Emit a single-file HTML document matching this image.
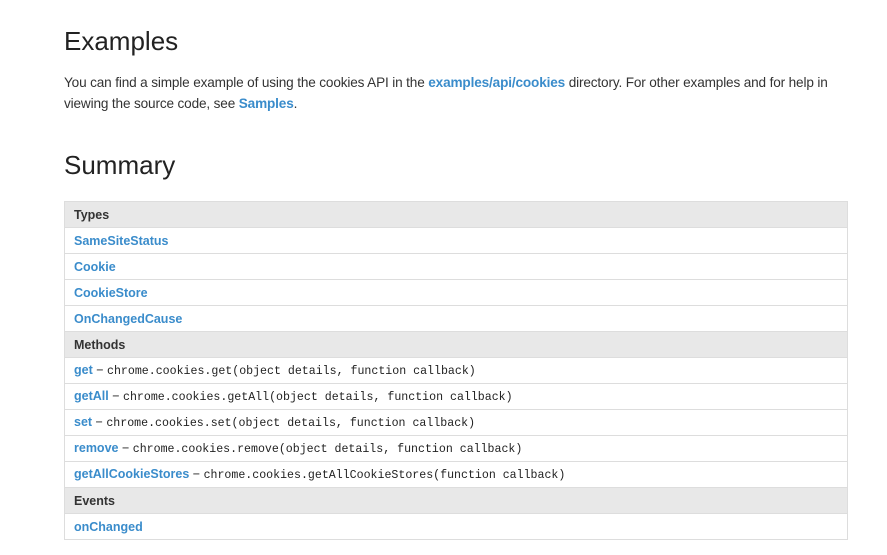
<!DOCTYPE html>
<html><head><style>
body{margin:0;background:#fff;font-family:"Liberation Sans",Arial,sans-serif;color:#222;}
h2{font-weight:normal;font-size:26px;margin:0;position:absolute;left:64px;}
p{position:absolute;left:64px;top:72px;margin:0;font-size:13.6px;line-height:21px;width:790px;color:#333;letter-spacing:-0.15px}
a{color:#3a8ccb;font-weight:bold;text-decoration:none}
table{position:absolute;left:64px;top:201px;width:784px;border-collapse:collapse;font-size:12.5px}
td{height:25px;border:1px solid #ddd;padding:0 0 0 9px;}
tr.h td{background:#e8e8e8;font-weight:bold;color:#333}
code{font-family:"Liberation Mono",monospace;font-size:11.6px;color:#222}
</style></head><body>
<h2 style="top:26px">Examples</h2>
<p>You can find a simple example of using the cookies API in the <a>examples/api/cookies</a> directory. For other examples and for help in<br>viewing the source code, see <a>Samples</a>.</p>
<h2 style="top:150px">Summary</h2>
<table>
<tr class="h"><td>Types</td></tr>
<tr><td><a>SameSiteStatus</a></td></tr>
<tr><td><a>Cookie</a></td></tr>
<tr><td><a>CookieStore</a></td></tr>
<tr><td><a>OnChangedCause</a></td></tr>
<tr class="h"><td>Methods</td></tr>
<tr><td><a>get</a> − <code>chrome.cookies.get(object details, function callback)</code></td></tr>
<tr><td><a>getAll</a> − <code>chrome.cookies.getAll(object details, function callback)</code></td></tr>
<tr><td><a>set</a> − <code>chrome.cookies.set(object details, function callback)</code></td></tr>
<tr><td><a>remove</a> − <code>chrome.cookies.remove(object details, function callback)</code></td></tr>
<tr><td><a>getAllCookieStores</a> − <code>chrome.cookies.getAllCookieStores(function callback)</code></td></tr>
<tr class="h"><td>Events</td></tr>
<tr><td><a>onChanged</a></td></tr>
</table>
</body></html>
